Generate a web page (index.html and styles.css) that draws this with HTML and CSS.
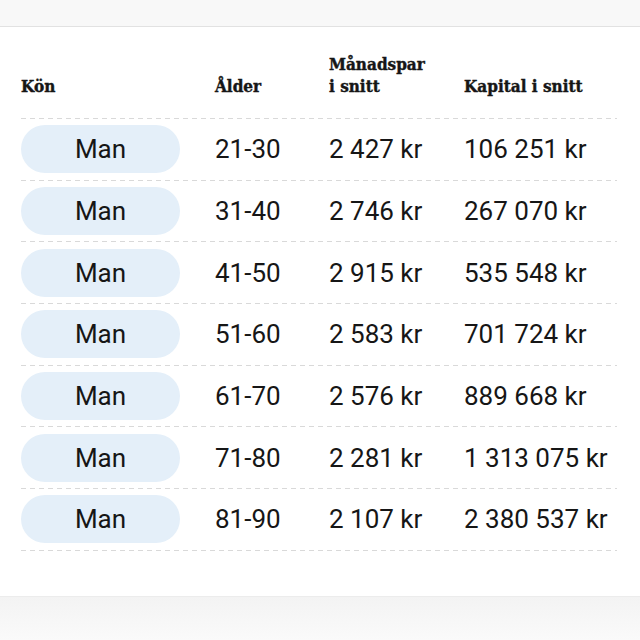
FILE: index.html
```html
<!DOCTYPE html>
<html lang="sv">
<head>
<meta charset="utf-8">
<link rel="stylesheet" href="styles.css">
</head>
<body>
<div class="topbar"></div>
<main class="card">
  <table class="stats">
    <thead>
      <tr>
        <th class="c1">Kön</th>
        <th class="c2">Ålder</th>
        <th class="c3">Månadspar<br>i snitt</th>
        <th class="c4">Kapital i snitt</th>
      </tr>
    </thead>
    <tbody>
      <tr><td><span class="pill">Man</span></td><td>21-30</td><td>2 427 kr</td><td>106 251 kr</td></tr>
      <tr><td><span class="pill">Man</span></td><td>31-40</td><td>2 746 kr</td><td>267 070 kr</td></tr>
      <tr><td><span class="pill">Man</span></td><td>41-50</td><td>2 915 kr</td><td>535 548 kr</td></tr>
      <tr><td><span class="pill">Man</span></td><td>51-60</td><td>2 583 kr</td><td>701 724 kr</td></tr>
      <tr><td><span class="pill">Man</span></td><td>61-70</td><td>2 576 kr</td><td>889 668 kr</td></tr>
      <tr><td><span class="pill">Man</span></td><td>71-80</td><td>2 281 kr</td><td>1 313 075 kr</td></tr>
      <tr><td><span class="pill">Man</span></td><td>81-90</td><td>2 107 kr</td><td>2 380 537 kr</td></tr>
    </tbody>
  </table>
</main>
<div class="bottombar"></div>
</body>
</html>
```
FILE: styles.css
```css
html, body {
  margin: 0;
  padding: 0;
  background: #ffffff;
}
body {
  width: 640px;
  height: 640px;
  overflow: hidden;
  display: flex;
  flex-direction: column;
  color: #161616;
  font-family: Roboto, "Liberation Sans", sans-serif;
}
.topbar {
  height: 26px;
  background: #f8f8f8;
  border-bottom: 1px solid #e2e2e2;
  flex: none;
}
.card {
  height: 569px;
  flex: none;
  padding: 0 23px 0 21px;
  background: #fff;
}
.bottombar {
  flex: 1;
  border-top: 1px solid #ececec;
  background: linear-gradient(#f3f3f3, #fafafa);
}
.stats {
  width: 596px;
  border-collapse: collapse;
  table-layout: fixed;
}
.stats th {
  font-family: "DejaVu Serif", serif;
  font-stretch: condensed;
  font-weight: bold;
  font-size: 17px;
  line-height: 22px;
  text-align: left;
  vertical-align: bottom;
  height: 92px;
  padding: 0 0 22px 0;
  box-sizing: border-box;
  -webkit-text-stroke: 0.4px #161616;
}
.c1 { width: 194px; }
.c2 { width: 114px; }
.c3 { width: 135px; }
.c4 { width: 153px; }
.stats thead tr,
.stats tbody tr {
  background-image: repeating-linear-gradient(90deg, #d9d9d9 0 5px, transparent 5px 9px);
  background-size: 100% 1px;
  background-repeat: no-repeat;
  background-position: left bottom;
}
.stats td {
  height: 61.7px;
  padding: 0 0 1px 0;
  box-sizing: border-box;
  font-size: 26px;
  vertical-align: middle;
  white-space: nowrap;
}
.pill {
  display: flex;
  align-items: center;
  justify-content: center;
  width: 159px;
  height: 48px;
  border-radius: 24px;
  background: #e4eff9;
}
```
